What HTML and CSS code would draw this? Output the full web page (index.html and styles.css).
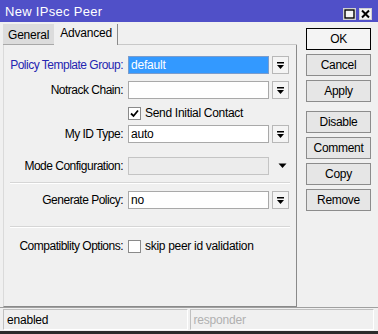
FILE: index.html
```html
<!DOCTYPE html>
<html lang="en">
<head>
<meta charset="UTF-8">
<meta name="viewport" content="width=device-width, initial-scale=1.0">
<title>New IPsec Peer</title>
<link rel="stylesheet" href="styles.css">
</head>
<body>
<div class="window">
  <div class="titlebar">
    <span class="title">New IPsec Peer</span>
    <div class="win-btns">
      <span class="win-btn"><svg width="11" height="10" viewBox="0 0 11 10"><rect x="1" y="1" width="9" height="8" fill="none" stroke="#000" stroke-width="1.4"/></svg></span>
      <span class="win-btn"><svg width="11" height="10" viewBox="0 0 11 10"><path d="M2 1.5 L9 8.5 M9 1.5 L2 8.5" stroke="#000" stroke-width="2"/></svg></span>
    </div>
  </div>
  <div class="body">
    <div class="left">
      <div class="tabs">
        <div class="tab">General</div>
        <div class="tab active">Advanced</div>
        <div class="tab-rest"></div>
      </div>
      <div class="panel">
        <div class="row first">
          <label class="lbl focus">Policy Template Group:</label>
          <div class="field selected">default</div>
          <span class="drop"><svg width="9" height="9" viewBox="0 0 9 9"><rect x="1" y="1" width="7" height="1.5" fill="#000"/><path d="M1 4 H8 L4.5 8 Z" fill="#000"/></svg></span>
        </div>
        <div class="row">
          <label class="lbl">Notrack Chain:</label>
          <div class="field"></div>
          <span class="drop"><svg width="9" height="9" viewBox="0 0 9 9"><rect x="1" y="1" width="7" height="1.5" fill="#000"/><path d="M1 4 H8 L4.5 8 Z" fill="#000"/></svg></span>
        </div>
        <div class="row check-row">
          <span class="lbl"></span>
          <span class="check"><svg width="11" height="11" viewBox="0 0 11 11"><path d="M2 5.5 L4.5 8 L9 2.5" fill="none" stroke="#000" stroke-width="1.8"/></svg></span>
          <span class="check-text">Send Initial Contact</span>
        </div>
        <div class="row after-check">
          <label class="lbl">My ID Type:</label>
          <div class="field">auto</div>
          <span class="drop"><svg width="9" height="9" viewBox="0 0 9 9"><rect x="1" y="1" width="7" height="1.5" fill="#000"/><path d="M1 4 H8 L4.5 8 Z" fill="#000"/></svg></span>
        </div>
        <div class="row mode">
          <label class="lbl">Mode Configuration:</label>
          <div class="field disabled"></div>
          <span class="drop plain"><svg width="9" height="6" viewBox="0 0 9 6"><path d="M0.5 0.5 H8.5 L4.5 5 Z" fill="#000"/></svg></span>
        </div>
        <div class="sep"></div>
        <div class="row after-sep">
          <label class="lbl">Generate Policy:</label>
          <div class="field">no</div>
          <span class="drop"><svg width="9" height="9" viewBox="0 0 9 9"><rect x="1" y="1" width="7" height="1.5" fill="#000"/><path d="M1 4 H8 L4.5 8 Z" fill="#000"/></svg></span>
        </div>
        <div class="sep low"></div>
        <div class="row check-row compat">
          <label class="lbl">Compatiblity Options:</label>
          <span class="check"></span>
          <span class="check-text">skip peer id validation</span>
        </div>
      </div>
    </div>
    <div class="buttons">
      <button class="btn default">OK</button>
      <button class="btn">Cancel</button>
      <button class="btn">Apply</button>
      <button class="btn group">Disable</button>
      <button class="btn">Comment</button>
      <button class="btn">Copy</button>
      <button class="btn">Remove</button>
    </div>
  </div>
  <div class="statusbar">
    <div class="status">enabled</div>
    <div class="status dim">responder</div>
  </div>
</div>
</body>
</html>
```

FILE: styles.css
```css
* {
  box-sizing: border-box;
}
body {
  margin: 0;
  font-family: 'Liberation Sans', Arial, sans-serif;
  font-size: 12px;
  letter-spacing: -0.5px;
  color: #000;
}
.window {
  width: 378px;
  height: 334px;
  background-color: #f0f0f0;
  display: flex;
  flex-direction: column;
  border-bottom: 3px solid #2b2b2b;
}
.titlebar {
  height: 22px;
  background-color: #5050c8;
  display: flex;
  align-items: center;
  justify-content: space-between;
  padding: 0 6px 0 5px;
}
.title {
  color: #fff;
  font-size: 13px;
  letter-spacing: 0.3px;
  margin-top: 1px;
}
.win-btns {
  display: flex;
  gap: 3px;
  margin-top: 5px;
}
.win-btn {
  width: 13px;
  height: 12px;
  background-color: #f4f4f4;
  border: 1px solid #d0d0d0;
  display: flex;
  align-items: center;
  justify-content: center;
}
.body {
  flex: 1;
  display: flex;
  padding: 2px 0 0 3px;
}
.left {
  width: 294px;
  display: flex;
  flex-direction: column;
}
.tabs {
  display: flex;
  height: 21px;
  font-size: 12px;
  letter-spacing: -0.2px;
}
.tab {
  padding: 4px 5px 0 5px;
  background-color: #dcdcdc;
  border-bottom: 1px solid #a8a8a8;
}
.tab.active {
  background-color: #f0f0f0;
  padding: 2px 5px 0 6px;
  border-bottom: none;
  border-right: 1px solid #8a8a8a;
}
.tab-rest {
  flex: 1;
  border-bottom: 1px solid #c8c8c8;
}
.panel {
  flex: 1;
  border-right: 1px solid #8a8a8a;
  border-left: 1px solid #dadada;
  border-bottom: 1px solid #8a8a8a;
  padding-top: 11px;
}
.row {
  display: flex;
  align-items: center;
  height: 18px;
  margin-top: 7px;
}
.row.first {
  margin-top: 0;
}
.lbl {
  width: 119px;
  text-align: right;
  margin-right: 5px;
  flex-shrink: 0;
  white-space: nowrap;
}
.lbl.focus {
  color: #2525b0;
}
.field {
  width: 141px;
  height: 18px;
  background-color: #fff;
  border: 1px solid #a9a9a9;
  padding: 1px 2px;
  line-height: 14px;
  letter-spacing: -0.2px;
}
.field.selected {
  background-color: #3399ff;
  color: #fff;
  border-color: #7a9ccc;
}
.field.disabled {
  background-color: #ececec;
  border-color: #c4c4c4;
}
.drop {
  width: 17px;
  height: 18px;
  margin-left: 3px;
  border: 1px solid #b8b8b8;
  background-color: #f4f4f4;
  display: flex;
  align-items: center;
  justify-content: center;
}
.drop.plain {
  border: none;
  background: none;
  padding-left: 3px;
}
.check-row {
  height: 12px;
  margin-top: 8px;
}
.check {
  width: 13px;
  height: 13px;
  background-color: #fff;
  border: 1px solid #8a8a8a;
  display: flex;
  align-items: center;
  justify-content: center;
}
.check-text {
  margin-left: 4px;
  letter-spacing: -0.3px;
}
.row.after-check {
  margin-top: 6px;
}
.row.mode {
  margin-top: 14px;
}
.sep {
  height: 2px;
  margin: 7px 6px 0 6px;
  border-top: 1px solid #d6d6d6;
  border-bottom: 1px solid #fff;
}
.row.after-sep {
  margin-top: 7px;
}
.sep.low {
  margin-top: 17px;
}
.row.compat {
  margin-top: 12px;
}
.buttons {
  display: flex;
  flex-direction: column;
  gap: 4px;
  margin: 4px 0 0 9px;
}
.btn {
  width: 65px;
  height: 22px;
  font-family: 'Liberation Sans', Arial, sans-serif;
  font-size: 12px;
  letter-spacing: -0.3px;
  background-color: #e6e6e6;
  border: 1px solid #8c8c8c;
  padding: 0;
  color: #000;
}
.btn.default {
  border: 1px solid #000;
  background-color: #f4f4f4;
}
.btn.group {
  margin-top: 5px;
}
.statusbar {
  height: 24px;
  display: flex;
  gap: 2px;
  padding: 1px 4px 1px 3px;
  border-top: 1px solid #a0a0a0;
  letter-spacing: -0.2px;
}
.status {
  flex: 1;
  border: 1px solid #c8c8c8;
  border-color: #c0c0c0 #ffffff #ffffff #c0c0c0;
  padding: 3px 3px;
}
.dim {
  color: #b0b0b0;
}
```
